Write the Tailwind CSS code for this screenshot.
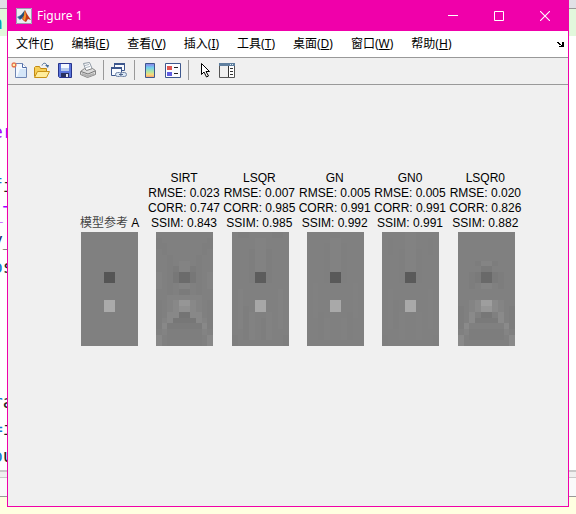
<!DOCTYPE html>
<html lang="zh-CN">
<head>
<meta charset="utf-8">
<title>Figure 1</title>
<script src="https://cdn.jsdelivr.net/npm/@tailwindcss/browser@4"></script>
</head>
<body class="relative h-screen overflow-hidden bg-white font-['Noto_Sans','Noto_Sans_CJK_SC',sans-serif] text-xs text-black">
<!-- Editor behind the figure window -->
<div class="flex h-full flex-col" aria-hidden="true">
  <div class="h-[9px] border-b border-[#999] bg-[#e1e1e6]"></div>
  <div class="h-[27px] overflow-hidden bg-[#e2f8dc] font-['DejaVu_Sans_Mono',monospace] text-lg leading-[27px] text-[#00a0b0]"><span class="-ml-2">n</span></div>
  <div class="flex-1 overflow-hidden pt-[82px] font-['DejaVu_Sans_Mono',monospace] text-lg leading-[27px] text-[#222]">
    <pre class="-ml-2 font-[inherit]"><span class="text-[#a000ff]">er</span>

<span class="text-[#1478c8]">f</span>i
<span class="text-[#a000ff]">_T</span>
<span class="text-[#1a3070]">y</span>_
<span class="text-[#1478c8]">o</span>s




<span class="text-[#1478c8]">r</span>a
<span class="text-[#1478c8]">=</span>i
<span class="text-[#1478c8]">o</span>u</pre>
  </div>
  <div class="h-2 border-t-2 border-b border-[#c9c9c9] bg-[#f0f0f0]"></div>
  <div class="h-[19px] border-b border-[#999] bg-[#fafafa]"></div>
  <div class="h-[17px] bg-[#ffffe1]"></div>
</div>

<!-- Figure window -->
<main class="absolute inset-x-[7px] top-0 bottom-[7px] flex flex-col border border-t-0 border-[#f000aa] bg-[#f0f0f0]">
  <header class="flex h-[31px] shrink-0 items-center bg-[#f000aa] pl-2 text-white">
    <svg class="size-4" viewBox="0 0 16 16"><path fill="#e9eef3" d="M0 0h16v16H0z"/><path fill="#3f78a8" d="M1 9l4-2 2 2-3 3z"/><path fill="#245078" d="M5 7l4-5-1 6-3 3-2-1z"/><path fill="#c0391c" d="M9 2l2 4 4 6-3-1-2 3-2-1-2-2 2-4z"/><path fill="#f39a2b" d="M9 2l1 6-1 5-2-2 1-3z"/><path fill="none" stroke="#9b9fb0" d="M.5.5h15v15H.5z"/></svg>
    <h1 class="ml-[5px] flex-1">Figure 1</h1>
    <button aria-label="最小化" class="flex h-full w-[45px] items-center justify-center"><svg class="size-[11px]" viewBox="0 0 11 11"><path stroke="#fff" d="M0 5.5h10"/></svg></button>
    <button aria-label="最大化" class="flex h-full w-[46px] items-center justify-center"><svg class="size-[10px]" viewBox="0 0 10 10"><path fill="none" stroke="#fff" d="M.5.5h9v9h-9z"/></svg></button>
    <button aria-label="关闭" class="flex h-full w-[46px] items-center justify-center"><svg class="size-[10px]" viewBox="0 0 10 10"><path stroke="#fff" stroke-width="1.1" d="M0 0l10 10M10 0L0 10"/></svg></button>
  </header>

  <nav class="flex h-[27px] shrink-0 items-center gap-[18px] border-b border-[#999] bg-white pl-2 pr-1 whitespace-nowrap">
    <button>文件(<u>F</u>)</button>
    <button>编辑(<u>E</u>)</button>
    <button>查看(<u>V</u>)</button>
    <button>插入(<u>I</u>)</button>
    <button>工具(<u>T</u>)</button>
    <button>桌面(<u>D</u>)</button>
    <button>窗口(<u>W</u>)</button>
    <button>帮助(<u>H</u>)</button>
    <button class="ml-auto" aria-label="停靠"><svg class="h-[5px] w-[7px]" viewBox="0 0 7 5"><path d="M0 0h2v1h1v1h1v1h1V0h2v5H2V4h2V3H2V2H1V1H0z"/></svg></button>
  </nav>

  <div role="toolbar" aria-label="图窗工具栏" class="flex h-[27px] shrink-0 items-center border-b border-[#999] pb-[3px] pl-[3px]">
    <div class="flex gap-[7px]">
      <button aria-label="新建图窗"><svg class="size-4" viewBox="0 0 16 16"><path fill="#f4f9ff" stroke="#6f86b4" d="M4.500 1.500h7l4 4v10h-11z"/><path fill="#d5e6f8" d="M9 7h6v8H6z"/><path fill="#fff" stroke="#4f6ca8" d="M11.500 1.500v4h4"/><path stroke="#e8744c" stroke-width="1.200" d="M3 0v6M0 3h6M1 1l4 4M5 1L1 5"/><path fill="#fff3a8" d="M2 2h2v2H2z"/></svg></button>
      <button aria-label="打开文件"><svg class="size-4" viewBox="0 0 16 16"><path fill="#f6cf57" stroke="#c28a13" d="M.5 14.500v-9l1-1h4l1 2h6v3"/><path fill="#ffed9d" stroke="#c99216" d="M.5 15.500l3-6h12l-3 6z"/><path fill="none" stroke="#466b98" d="M8 3.500c1-3 4-3 5 0"/><path fill="#466b98" d="M11 3h4l-1 3z"/></svg></button>
      <button aria-label="保存"><svg class="size-4" viewBox="0 0 16 16"><path fill="#5b76dc" stroke="#28348c" d="M1.500 1.500h13v14h-12l-1-1z"/><path fill="#f3f7fd" d="M4 2h8v7H4z"/><path fill="#b8cbed" d="M4 6h8v3H4z"/><path fill="#28305e" d="M4 11h8v4H4z"/><path fill="#e6e9f3" d="M9 12h2v3H9z"/></svg></button>
      <button aria-label="打印"><svg class="size-4" viewBox="0 0 16 16"><path fill="#fff" stroke="#8d97a3" d="M3.500 1.500l6-1 3 7-6 2z"/><path stroke="#a8b2be" d="M5 3.500l4-1M6 5.500l4-1"/><path fill="#dcdcdc" stroke="#858585" d="M.5 9.500l4-3 2 2 6-2 3 2v4l-8 3-7-3z"/><path fill="#b0b0b0" d="M2 11l6 2 6-2v2l-6 2-6-2z"/><path fill="none" stroke="#777" d="M1 9.500l7 2.500 7-3"/></svg></button>
    </div>
    <span class="ml-[7px] h-5 w-px bg-[#999]"></span>
    <button class="ml-[7px]" aria-label="链接绘图"><svg class="size-4" viewBox="0 0 16 16"><path fill="#f8fbff" stroke="#3d578d" d="M3.500 1.500h10v7h-10z"/><path fill="#3d578d" d="M3 1h11v2H3z"/><path fill="#f8fbff" stroke="#3d578d" d="M.5 5.500h10v8H.5z"/><path fill="#3d578d" d="M0 5h11v2H0z"/><rect x="4.500" y="10.500" width="6" height="4" rx="2" fill="#dbe8f5" stroke="#7084a6"/><rect x="9.500" y="10.500" width="6" height="4" rx="2" fill="#dbe8f5" stroke="#7084a6"/><path stroke="#50658c" d="M8 12.500h4"/></svg></button>
    <span class="ml-[7px] h-5 w-px bg-[#999]"></span>
    <button class="ml-[7px]" aria-label="插入颜色栏"><svg class="size-4" viewBox="0 0 16 16"><defs><linearGradient id="cb" x2="0" y2="1"><stop stop-color="#8b7be8"/><stop offset=".3" stop-color="#72d1ed"/><stop offset=".6" stop-color="#b5e6a0"/><stop offset=".8" stop-color="#fbd878"/><stop offset="1" stop-color="#f39a76"/></linearGradient></defs><path fill="url(#cb)" stroke="#3d578d" d="M3.500 1.500h9v14h-9z"/></svg></button>
    <button class="ml-[7px]" aria-label="插入图例"><svg class="size-4" viewBox="0 0 16 16"><path fill="#fbfcff" stroke="#3d578d" d="M.5 1.500h15v14H.5z"/><path fill="#e05550" d="M2 4h5v4H2z"/><path fill="#605de0" d="M2 10h5v4H2z"/><path stroke="#222" d="M9 5.500h4M9 11.500h4"/></svg></button>
    <span class="ml-[7px] h-5 w-px bg-[#999]"></span>
    <button class="ml-[9px]" aria-label="编辑绘图"><svg class="size-4" viewBox="0 0 16 16"><path fill="#fff" stroke="#000" d="M3.500 1.500v11l2.500-2.500 2.500 5 2-1-2.500-4.500h3.500z"/></svg></button>
    <button class="ml-[5px]" aria-label="打开属性检查器"><svg class="size-4" viewBox="0 0 16 16"><path fill="#efefef" stroke="#555" d="M.5 1.500h15v14H.5z"/><path fill="#5f7f9f" d="M0 1h16v3H0z"/><path fill="#dfe8ef" d="M11 2h1v1h-1zM13 2h1v1h-1z"/><path fill="#fff" d="M10 4h5v11h-5z"/><path stroke="#333" d="M9.500 4v11M11 6.500h3M11 9.500h3M11 12.500h3"/></svg></button>
  </div>

  <section class="grid grid-cols-6 items-end pt-[86px] pr-11 pl-16 text-center font-['Liberation_Sans','Noto_Sans_CJK_SC',sans-serif] leading-[15px] whitespace-nowrap">
    <figure class="flex flex-col items-center">
      <figcaption><span class="text-[#444]">模型参考</span> A</figcaption>
      <svg class="mt-px h-[114px] w-[57px]" viewBox="0 0 10 20" shape-rendering="crispEdges"><path fill="#808080" d="M0 0h10v20H0z"/><path fill="#555" d="M4 7h2v2H4z"/><path fill="#aaa" d="M4 12h2v2H4z"/></svg>
    </figure>
    <figure class="flex flex-col items-center">
      <figcaption class="flex flex-col items-center pr-[2px]"><span>SIRT</span><span>RMSE: 0.023</span><span>CORR: 0.747</span><span>SSIM: 0.843</span></figcaption>
      <svg class="mt-px h-[114px] w-[57px]" viewBox="0 0 10 20" shape-rendering="crispEdges"><path fill="#808080" d="M0 0h10v20H0z"/><path fill="#7e7e7e" d="M0 1h1v2H0zM9 1h1v2H9zM1 2h1v2H1zM8 2h1v2H8zM2 4h1v7H2zM7 4h1v7H7zM0 12h1v5H0zM9 12h1v5H9zM2 17h6v3H2z"/><path fill="#838383" d="M4 5h2v2H4zM0 7h1v3H0zM9 7h1v3H9zM4 9h2v1H4zM2 11h6v2H2zM2 13h1v2H2zM7 13h1v2H7zM1 15h1v3H1zM8 15h1v3H8z"/><path fill="#7b7b7b" d="M3 6h1v1H3zM6 6h1v1H6zM4 10h2v1H4zM2 16h6v1H2z"/><path fill="#777" d="M3 7h1v2H3zM6 7h1v2H6zM3 15h4v1H3z"/><path fill="#6b6b6b" d="M4 7h2v2H4z"/><path fill="#888" d="M3 12h1v2H3zM6 12h1v2H6zM2 14h2v1H2zM6 14h2v1H6zM2 15h1v1H2zM7 15h1v1H7zM1 16h1v1H1zM8 16h1v1H8zM0 18h1v2H0zM9 18h1v2H9z"/><path fill="#969696" d="M4 12h2v1H4z"/><path fill="#909090" d="M4 13h2v1H4z"/><path fill="#747474" d="M4 14h2v1H4z"/></svg>
    </figure>
    <figure class="flex flex-col items-center">
      <figcaption class="flex flex-col items-center pr-[2px]"><span>LSQR</span><span>RMSE: 0.007</span><span>CORR: 0.985</span><span>SSIM: 0.985</span></figcaption>
      <svg class="mt-px h-[114px] w-[57px]" viewBox="0 0 10 20" shape-rendering="crispEdges"><path fill="#808080" d="M0 0h10v20H0z"/><path fill="#7e7e7e" d="M1 0h2v1H1zM7 0h2v1H7zM3 3h1v6H3zM6 3h1v6H6zM2 13h1v6H2zM5 15h1v4H5zM0 18h1v2H0zM9 18h1v2H9z"/><path fill="#828282" d="M4 1h2v6H4zM1 10h1v7H1zM8 10h1v7H8zM3 14h1v5H3zM6 14h1v5H6z"/><path fill="#5c5c5c" d="M4 7h2v2H4z"/><path fill="#a7a7a7" d="M4 12h2v2H4z"/></svg>
    </figure>
    <figure class="flex flex-col items-center">
      <figcaption class="flex flex-col items-center pr-[2px]"><span>GN</span><span>RMSE: 0.005</span><span>CORR: 0.991</span><span>SSIM: 0.992</span></figcaption>
      <svg class="mt-px h-[114px] w-[57px]" viewBox="0 0 10 20" shape-rendering="crispEdges"><path fill="#808080" d="M0 0h10v20H0z"/><path fill="#7f7f7f" d="M3 2h1v7H3zM6 2h1v7H6zM2 14h1v5H2zM7 14h1v5H7z"/><path fill="#828282" d="M4 1h2v6H4z"/><path fill="#818181" d="M1 9h1v6H1zM8 9h1v6H8zM3 15h1v4H3zM6 15h1v4H6z"/><path fill="#595959" d="M4 7h2v2H4z"/><path fill="#a9a9a9" d="M4 12h2v2H4z"/></svg>
    </figure>
    <figure class="flex flex-col items-center">
      <figcaption class="flex flex-col items-center pr-[2px]"><span>GN0</span><span>RMSE: 0.005</span><span>CORR: 0.991</span><span>SSIM: 0.991</span></figcaption>
      <svg class="mt-px h-[114px] w-[57px]" viewBox="0 0 10 20" shape-rendering="crispEdges"><path fill="#808080" d="M0 0h10v20H0z"/><path fill="#7f7f7f" d="M1 1h1v3H1zM8 1h1v3H8zM3 3h1v6H3zM6 3h1v6H6zM2 12h1v5H2zM0 18h1v2H0zM9 18h1v2H9z"/><path fill="#828282" d="M4 0h2v7H4z"/><path fill="#818181" d="M1 10h1v7H1zM8 10h1v7H8zM3 14h1v5H3zM6 14h1v5H6z"/><path fill="#5a5a5a" d="M4 7h2v2H4z"/><path fill="#a9a9a9" d="M4 12h2v2H4z"/></svg>
    </figure>
    <figure class="flex flex-col items-center">
      <figcaption class="flex flex-col items-center pr-[2px]"><span>LSQR0</span><span>RMSE: 0.020</span><span>CORR: 0.826</span><span>SSIM: 0.882</span></figcaption>
      <svg class="mt-px h-[114px] w-[57px]" viewBox="0 0 10 20" shape-rendering="crispEdges"><path fill="#808080" d="M0 0h10v20H0z"/><path fill="#7d7d7d" d="M3 5h1v1H3zM6 5h1v1H6zM2 7h1v3H2zM7 7h1v3H7zM2 17h6v2H2zM0 13h1v4H0zM9 13h1v4H9z"/><path fill="#848484" d="M4 5h2v1H4zM4 9h2v1H4zM2 12h1v2H2zM7 12h1v2H7zM1 16h1v2H1zM8 16h1v2H8z"/><path fill="#7a7a7a" d="M3 7h1v2H3zM6 7h1v2H6zM4 6h2v1H4zM3 15h4v1H3z"/><path fill="#696969" d="M4 7h2v2H4z"/><path fill="#8a8a8a" d="M3 12h1v2H3zM6 12h1v2H6zM2 14h1v2H2zM7 14h1v2H7zM1 16h1v1H1zM8 16h1v1H8zM0 18h1v2H0zM9 18h1v2H9z"/><path fill="#9e9e9e" d="M4 12h2v1H4z"/><path fill="#969696" d="M4 13h2v1H4z"/><path fill="#777" d="M4 14h2v1H4z"/></svg>
    </figure>
  </section>
</main>
</body>
</html>
